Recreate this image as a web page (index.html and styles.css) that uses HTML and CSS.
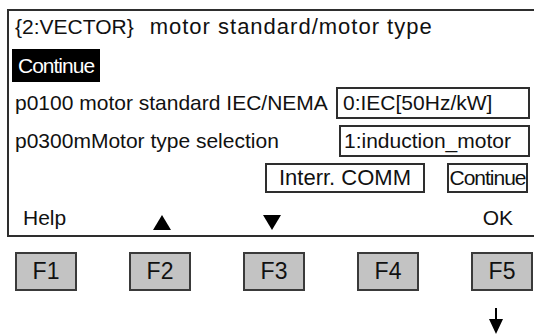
FILE: index.html
```html
<!DOCTYPE html>
<html>
<head>
<meta charset="utf-8">
<link rel="stylesheet" href="styles.css">
</head>
<body>
<div class="screen">
  <div class="title"><span class="title-id">{2:VECTOR}</span><span class="title-text">motor standard/motor type</span></div>
  <div class="row-sel"><span class="sel">Continue</span></div>
  <div class="param">
    <span class="label">p0100 motor standard IEC/NEMA</span>
    <span class="value value-first">0:IEC[50Hz/kW]</span>
  </div>
  <div class="param">
    <span class="label">p0300mMotor type selection</span>
    <span class="value">1:induction_motor</span>
  </div>
  <div class="buttons">
    <span class="btn btn-wide">Interr. COMM</span>
    <span class="btn btn-cont">Continue</span>
  </div>
  <div class="softkeys">
    <span class="sk sk-help">Help</span>
    <span class="sk sk-up"><svg width="18" height="15" viewBox="0 0 18 15"><polygon points="9,0 18,15 0,15" fill="#000"/></svg></span>
    <span class="sk sk-down"><svg width="18" height="15" viewBox="0 0 18 15"><polygon points="0,0 18,0 9,15" fill="#000"/></svg></span>
    <span class="sk sk-ok">OK</span>
  </div>
</div>
<div class="fkeys">
  <span class="fkey">F1</span>
  <span class="fkey">F2</span>
  <span class="fkey">F3</span>
  <span class="fkey">F4</span>
  <span class="fkey">F5</span>
</div>
<div class="arrow-row">
  <svg class="arrow" width="14" height="26" viewBox="0 0 14 26"><rect x="6" y="0" width="2" height="14" fill="#000"/><polygon points="0,11 14,11 7,26" fill="#000"/></svg>
</div>
</body>
</html>
```

FILE: styles.css
```css
html, body {
  margin: 0;
  padding: 0;
}
body {
  width: 534px;
  height: 335px;
  overflow: hidden;
  background: #fff;
  color: #111;
  font-family: "Liberation Sans", Arial, sans-serif;
  font-size: 21px;
}
.screen {
  margin: 9px 0 0 7px;
  height: 228px;
  box-sizing: border-box;
  border: 2px solid #2e2e2e;
  border-right: none;
  display: flex;
  flex-direction: column;
}
.title {
  height: 32px;
  line-height: 32px;
  padding-left: 6px;
  white-space: nowrap;
}
.title-text {
  margin-left: 16px;
  font-size: 22px;
  letter-spacing: 1px;
}
.row-sel {
  margin-top: 6px;
  height: 33px;
  display: flex;
}
.sel {
  margin-left: 3px;
  background: #000;
  color: #fff;
  padding: 0 6px;
  line-height: 33px;
  letter-spacing: -1px;
}
.param {
  display: flex;
  align-items: center;
  height: 32px;
  margin-top: 5px;
}
.param + .param {
  margin-top: 6px;
}
.label {
  padding-left: 6px;
}
.value {
  margin-left: auto;
  margin-right: 4px;
  width: 191px;
  height: 32px;
  box-sizing: border-box;
  border: 2px solid #2e2e2e;
  line-height: 28px;
  padding-left: 3px;
}
.value-first {
  width: 194px;
  padding-left: 5px;
}
.buttons {
  display: flex;
  justify-content: flex-end;
  margin-top: 6px;
  height: 30px;
}
.btn {
  box-sizing: border-box;
  height: 30px;
  border: 2px solid #2e2e2e;
  line-height: 26px;
  text-align: center;
}
.btn-wide {
  width: 160px;
  font-size: 22px;
}
.btn-cont {
  width: 81px;
  margin-left: 22px;
  margin-right: 6px;
  letter-spacing: -1px;
}
.softkeys {
  flex: 1;
  display: flex;
  align-items: center;
}
.sk {
  display: flex;
  align-items: center;
}
.sk-help {
  margin-left: 14px;
  margin-top: 8px;
}
.sk-up {
  margin-left: 87px;
  margin-top: 17px;
}
.sk-down {
  margin-left: 92px;
  margin-top: 17px;
}
.sk-ok {
  margin-left: auto;
  margin-right: 21px;
  margin-top: 8px;
}
.fkeys {
  display: flex;
  gap: 52px;
  margin: 15px 0 0 15px;
}
.fkey {
  width: 62px;
  height: 39px;
  box-sizing: border-box;
  background: #c3c3c3;
  border: 2px solid #3a3a3a;
  font-size: 23px;
  line-height: 35px;
  text-align: center;
}
.arrow-row {
  display: flex;
  margin-top: 17px;
  padding-left: 489px;
}
.arrow {
  display: block;
}
```
